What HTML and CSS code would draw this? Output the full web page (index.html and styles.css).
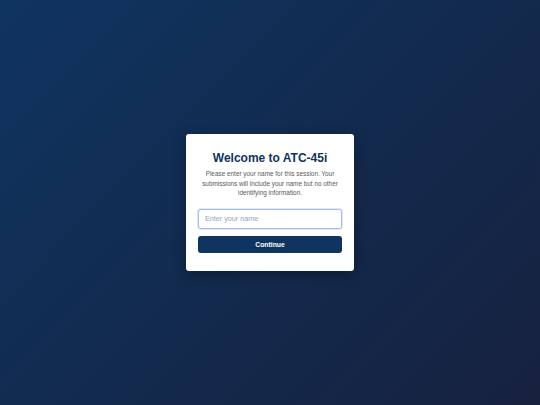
FILE: index.html
```html
<!DOCTYPE html>
<html lang="en">
<head>
<meta charset="utf-8">
<title>Welcome to ATC-45i</title>
<link rel="stylesheet" href="styles.css">
</head>
<body>
<main class="screen">
  <form class="card">
    <h1 class="title">Welcome to ATC-45i</h1>
    <p class="intro">Please enter your name for this session. Your submissions will include your name but no other identifying information.</p>
    <input class="name-input" type="text" placeholder="Enter your name" autofocus>
    <button class="continue" type="button">Continue</button>
  </form>
</main>
</body>
</html>
```

FILE: styles.css
```css
html, body {
  margin: 0;
  padding: 0;
  height: 100%;
}

body {
  font-family: "Liberation Sans", Arial, sans-serif;
  background: linear-gradient(135deg, #0f3460 0%, #16213e 100%);
}

.screen {
  height: 100vh;
  display: flex;
  align-items: center;
  justify-content: center;
}

.card {
  box-sizing: border-box;
  width: 168px;
  background: #ffffff;
  border-radius: 3px;
  padding: 17px 12px 18px;
  display: flex;
  flex-direction: column;
  box-shadow: 0 4px 14px rgba(0, 0, 0, 0.3);
}

.title {
  margin: 0 0 4px;
  font-size: 12px;
  line-height: 14px;
  font-weight: 700;
  color: #0f3460;
  text-align: center;
}

.intro {
  margin: 0 0 11px;
  font-size: 6.4px;
  line-height: 1.5;
  color: #5a5a5a;
  text-align: center;
}

.name-input {
  box-sizing: border-box;
  height: 20px;
  width: 100%;
  margin: 0 0 7px;
  padding: 0 6px;
  border: 1px solid #a4bde8;
  border-radius: 3px;
  box-shadow: 0 0 0 1px rgba(164, 189, 232, 0.35);
  font-family: "Liberation Sans", Arial, sans-serif;
  font-size: 7.2px;
  color: #333333;
  outline: none;
  caret-color: #333333;
}

.name-input::placeholder {
  color: #9aa3b5;
}

.continue {
  height: 17px;
  width: 100%;
  border: none;
  border-radius: 3px;
  background: #0f3460;
  color: #ffffff;
  font-family: "Liberation Sans", Arial, sans-serif;
  font-size: 6.8px;
  font-weight: 700;
  padding: 0;
  cursor: pointer;
}
```
